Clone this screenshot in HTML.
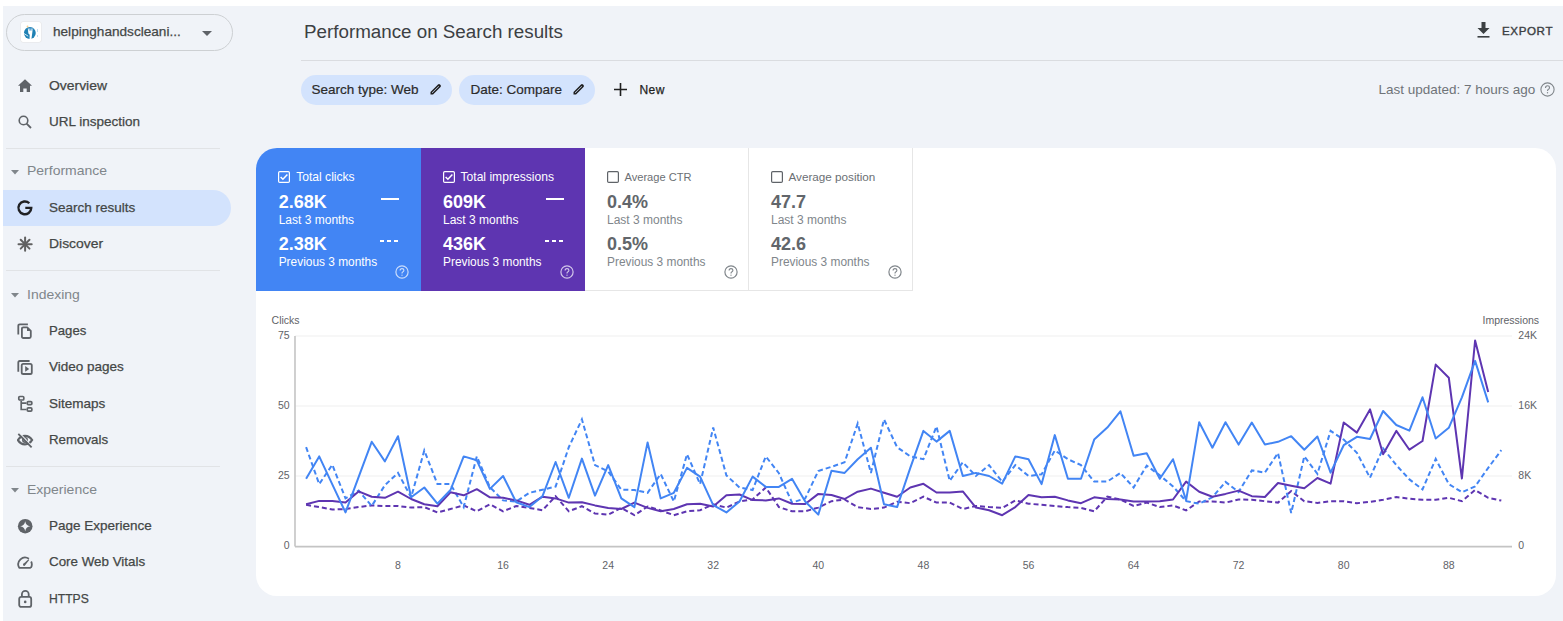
<!DOCTYPE html>
<html><head><meta charset="utf-8"><title>Performance on Search results</title>
<style>
html,body{margin:0;padding:0;width:1563px;height:621px;overflow:hidden;background:#fff}
#bg{position:absolute;left:3px;top:6px;width:1560px;height:615px;background:#f0f3f8}
.t{position:absolute;white-space:nowrap;line-height:1;font-family:"Liberation Sans",sans-serif}
</style></head><body>
<div id="bg"></div>
<div style="position:absolute;left:6px;top:14px;width:225px;height:35px;border:1px solid #cdd0d3;border-radius:19px;"></div>
<div style="position:absolute;left:21px;top:22px;width:20px;height:20px;background:#fff;border-radius:2px;box-shadow:0 0 0 0.5px #e4e4e4;"></div>
<svg style="position:absolute;left:21px;top:22px" width="20" height="20" viewBox="0 0 20 20"><circle cx="8.85" cy="11" r="5.9" fill="#1f81b4"/><path d="M6.8 6.6 L11.8 6.6 L11.2 11.5 L10.4 17.2 L8.5 17.2 L8.7 12.8 L7.4 11.4 Z" fill="#fff"/><path d="M2.8 11.4 L7.2 14.2" stroke="#fff" stroke-width="0.8"/><path d="M8 5.6 L8.3 8.6 M9.5 5.4 L9.6 8.6 M11 5.6 L10.9 8.6" stroke="#3d93c9" stroke-width="0.8"/><circle cx="6.5" cy="4.5" r="0.9" fill="#f7c46c" opacity="0.8"/><rect x="16" y="7" width="0.9" height="3" fill="#b9dbf0"/><rect x="16" y="13" width="0.9" height="2" fill="#b9dbf0"/></svg>
<div class="t" style="left:53px;top:25.49px;font-size:13.6px;color:#444746;font-weight:400;-webkit-text-stroke:0.25px #444746;">helpinghandscleani...</div>
<svg style="position:absolute;left:202px;top:31px" width="10" height="5" viewBox="0 0 10 5"><path d="M0 0 L10 0 L5 5 Z" fill="#5f6368"/></svg>
<div style="position:absolute;left:3px;top:190px;width:228px;height:36px;background:#d3e3fd;border-radius:0 18px 18px 0;"></div>
<div class="t" style="left:49px;top:78.87px;font-size:13.5px;color:#444746;font-weight:400;-webkit-text-stroke:0.25px #444746;transform:scaleX(1.03);transform-origin:0 0;">Overview</div>
<div class="t" style="left:49px;top:114.87px;font-size:13.5px;color:#444746;font-weight:400;-webkit-text-stroke:0.25px #444746;">URL inspection</div>
<div class="t" style="left:49px;top:200.87px;font-size:13.5px;color:#444746;font-weight:400;-webkit-text-stroke:0.25px #444746;">Search results</div>
<div class="t" style="left:49px;top:236.87px;font-size:13.5px;color:#444746;font-weight:400;-webkit-text-stroke:0.25px #444746;transform:scaleX(1.03);transform-origin:0 0;">Discover</div>
<div class="t" style="left:49px;top:323.87px;font-size:13.5px;color:#444746;font-weight:400;-webkit-text-stroke:0.25px #444746;transform:scaleX(0.975);transform-origin:0 0;">Pages</div>
<div class="t" style="left:49px;top:359.87px;font-size:13.5px;color:#444746;font-weight:400;-webkit-text-stroke:0.25px #444746;">Video pages</div>
<div class="t" style="left:49px;top:396.87px;font-size:13.5px;color:#444746;font-weight:400;-webkit-text-stroke:0.25px #444746;">Sitemaps</div>
<div class="t" style="left:49px;top:432.87px;font-size:13.5px;color:#444746;font-weight:400;-webkit-text-stroke:0.25px #444746;transform:scaleX(0.985);transform-origin:0 0;">Removals</div>
<div class="t" style="left:49px;top:518.87px;font-size:13.5px;color:#444746;font-weight:400;-webkit-text-stroke:0.25px #444746;">Page Experience</div>
<div class="t" style="left:49px;top:554.87px;font-size:13.5px;color:#444746;font-weight:400;-webkit-text-stroke:0.25px #444746;transform:scaleX(0.99);transform-origin:0 0;">Core Web Vitals</div>
<div class="t" style="left:49px;top:591.87px;font-size:13.5px;color:#444746;font-weight:400;-webkit-text-stroke:0.25px #444746;transform:scaleX(0.9);transform-origin:0 0;">HTTPS</div>
<div class="t" style="left:27px;top:164.07px;font-size:13.5px;color:#80868b;font-weight:400;transform:scaleX(1.035);transform-origin:0 0;">Performance</div>
<svg style="position:absolute;left:11px;top:169.5px" width="8" height="5" viewBox="0 0 8 5"><path d="M0 0 L8 0 L4 4.5 Z" fill="#80868b"/></svg>
<div class="t" style="left:27px;top:287.57px;font-size:13.5px;color:#80868b;font-weight:400;transform:scaleX(1.035);transform-origin:0 0;">Indexing</div>
<svg style="position:absolute;left:11px;top:293px" width="8" height="5" viewBox="0 0 8 5"><path d="M0 0 L8 0 L4 4.5 Z" fill="#80868b"/></svg>
<div class="t" style="left:27px;top:482.57px;font-size:13.5px;color:#80868b;font-weight:400;transform:scaleX(1.035);transform-origin:0 0;">Experience</div>
<svg style="position:absolute;left:11px;top:488px" width="8" height="5" viewBox="0 0 8 5"><path d="M0 0 L8 0 L4 4.5 Z" fill="#80868b"/></svg>
<div style="position:absolute;left:6px;top:148px;width:214px;height:1px;background:#e1e3e6"></div>
<div style="position:absolute;left:6px;top:270px;width:214px;height:1px;background:#e1e3e6"></div>
<div style="position:absolute;left:6px;top:466px;width:214px;height:1px;background:#e1e3e6"></div>
<svg style="position:absolute;left:18px;top:79px" width="14" height="13" viewBox="0 0 14 13"><path d="M7 0.3 L14 6.8 L12 6.8 L12 13 L8.7 13 L8.7 9.5 L5.3 9.5 L5.3 13 L2 13 L2 6.8 L0 6.8 Z" fill="#5f6368"/></svg>
<svg style="position:absolute;left:18px;top:115px" width="14" height="14" viewBox="0 0 14 14"><circle cx="5.5" cy="5.5" r="4.3" fill="none" stroke="#5f6368" stroke-width="1.6"/><path d="M8.6 8.6 L13 13" stroke="#5f6368" stroke-width="1.8"/></svg>
<svg style="position:absolute;left:16px;top:199px" width="18" height="18" viewBox="0 0 18 18"><path d="M13.3 4.25 A6.4 6.4 0 1 0 15.25 8.9 L9.3 8.9" fill="none" stroke="#202124" stroke-width="2.4"/></svg>
<svg style="position:absolute;left:17px;top:236px" width="17" height="17" viewBox="0 0 17 17"><g stroke="#616161" stroke-width="2" stroke-linecap="round"><path d="M8.1 1.6 V14.8"/><path d="M1.5 8.2 H14.7"/><path d="M3.7 3.8 L12.5 12.6"/><path d="M12.5 3.8 L3.7 12.6"/></g></svg>
<svg style="position:absolute;left:17px;top:322px" width="17" height="19" viewBox="0 0 17 19"><g fill="none" stroke="#5f6368" stroke-width="1.8"><path d="M1.3 12.5 V3.8 Q1.3 2.3 2.8 2.3 H10.9"/><path d="M4.9 6.8 Q4.9 5.3 6.4 5.3 H10.2 L13.8 8.9 V14.5 Q13.8 16 12.3 16 H6.4 Q4.9 16 4.9 14.5 Z" stroke-linejoin="round"/></g><path d="M10 5.3 L13.8 9.1 H10 Z" fill="#5f6368"/></svg>
<svg style="position:absolute;left:17px;top:358px" width="17" height="18" viewBox="0 0 17 18"><g fill="none" stroke="#5f6368" stroke-width="1.8"><path d="M1.3 13.8 V4.5 Q1.3 3 2.8 3 H12.6"/><rect x="4.7" y="5.9" width="10.1" height="10.1" rx="1.6"/></g><path d="M8.2 8.1 L12.2 10.95 L8.2 13.8 Z" fill="#5f6368"/></svg>
<svg style="position:absolute;left:17px;top:394px" width="17" height="19" viewBox="0 0 17 19"><g fill="none" stroke="#5f6368" stroke-width="1.7"><rect x="1.8" y="2.5" width="5" height="3.5" rx="1"/><rect x="10.25" y="7.65" width="4.6" height="2.9" rx="1"/><rect x="10.25" y="13.95" width="4.6" height="3.1" rx="1"/><path d="M4.2 6.85 V15.5 H9.4 M4.2 9.1 H9.4"/></g></svg>
<svg style="position:absolute;left:17px;top:432px" width="17" height="16" viewBox="0 0 17 16"><path d="M0.9 8.05 C2.9 4.6 5.6 3.8 8 3.8 C10.4 3.8 13.1 4.6 15.1 8.05 C13.1 11.5 10.4 12.3 8 12.3 C5.6 12.3 2.9 11.5 0.9 8.05 Z" fill="none" stroke="#5f6368" stroke-width="2.2"/><circle cx="8" cy="8.05" r="2.2" fill="none" stroke="#5f6368" stroke-width="1.5"/><path d="M2.3 0.6 L15.8 15.3" stroke="#f0f3f8" stroke-width="1.2"/><path d="M1.3 1.9 L14.6 15.3" stroke="#5f6368" stroke-width="1.8"/></svg>
<svg style="position:absolute;left:17px;top:518px" width="16" height="16" viewBox="0 0 16 16"><circle cx="8.2" cy="8.2" r="7.3" fill="#5f6368"/><path d="M8.2 3.2 Q8.9 7.5 13.2 8.2 Q8.9 8.9 8.2 13.2 Q7.5 8.9 3.2 8.2 Q7.5 7.5 8.2 3.2 Z" fill="#f0f3f8"/></svg>
<svg style="position:absolute;left:17px;top:555px" width="17" height="15" viewBox="0 0 17 15"><path d="M13.85 12.8 H2.25 A6.75 6.75 0 0 1 11.92 3.82 M14.17 6.5 A6.75 6.75 0 0 1 13.85 12.8" fill="none" stroke="#5f6368" stroke-width="1.8" stroke-linejoin="round"/><path d="M6.3 8.9 L11.5 4.3 L12.2 5 L7.9 10.6 Z" fill="#5f6368"/><circle cx="7.1" cy="9.75" r="1.15" fill="#5f6368"/></svg>
<svg style="position:absolute;left:17px;top:588px" width="17" height="21" viewBox="0 0 17 21"><g fill="none" stroke="#5f6368" stroke-width="1.8"><rect x="2.2" y="8.9" width="12" height="10" rx="2"/><path d="M4.9 8.9 V6.3 A3.4 3.4 0 0 1 11.7 6.3 V8.9"/></g><circle cx="8.2" cy="13.9" r="1.3" fill="#5f6368"/></svg>
<div class="t" style="left:304px;top:22.69px;font-size:18.8px;color:#3c4043;font-weight:400;">Performance on Search results</div>
<div style="position:absolute;left:301px;top:60px;width:1262px;height:1px;background:#dadce0"></div>
<svg style="position:absolute;left:1477px;top:22px" width="13" height="16" viewBox="0 0 13 16"><path d="M4.5 0 H8.5 V6 H12.5 L6.5 12 L0.5 6 H4.5 Z" fill="#3c4043"/><rect x="0.5" y="14" width="12" height="1.6" fill="#3c4043"/></svg>
<div class="t" style="left:1502px;top:25.38px;font-size:11.6px;color:#3c4043;font-weight:400;letter-spacing:0.6px;-webkit-text-stroke:0.4px #3c4043">EXPORT</div>
<div style="position:absolute;left:301px;top:75px;width:151px;height:30px;background:#d3e3fd;border-radius:15px"></div>
<div style="position:absolute;left:459px;top:75px;width:136px;height:30px;background:#d3e3fd;border-radius:15px"></div>
<div class="t" style="left:311.5px;top:82.57px;font-size:13.5px;color:#2b2b2b;font-weight:400;-webkit-text-stroke:0.2px #2b2b2b;">Search type: Web</div>
<div class="t" style="left:470.4px;top:82.57px;font-size:13.5px;color:#2b2b2b;font-weight:400;-webkit-text-stroke:0.2px #2b2b2b;">Date: Compare</div>
<svg style="position:absolute;left:430px;top:83px" width="12" height="12" viewBox="0 0 12 12"><path d="M0.5 11.5 L0.5 9 L8 1.5 Q9 0.5 10 1.5 L10.5 2 Q11.5 3 10.5 4 L3 11.5 Z M2 9.6 L2 10 L2.4 10 L9 3.4 L8.6 3 Z" fill="#1f1f1f" fill-rule="evenodd"/></svg>
<svg style="position:absolute;left:573px;top:83px" width="12" height="12" viewBox="0 0 12 12"><path d="M0.5 11.5 L0.5 9 L8 1.5 Q9 0.5 10 1.5 L10.5 2 Q11.5 3 10.5 4 L3 11.5 Z M2 9.6 L2 10 L2.4 10 L9 3.4 L8.6 3 Z" fill="#1f1f1f" fill-rule="evenodd"/></svg>
<svg style="position:absolute;left:614px;top:83px" width="13" height="13" viewBox="0 0 13 13"><path d="M5.7 0 H7.3 V5.7 H13 V7.3 H7.3 V13 H5.7 V7.3 H0 V5.7 H5.7 Z" fill="#1f1f1f"/></svg>
<div class="t" style="left:639.6px;top:83.84px;font-size:12px;color:#1f1f1f;font-weight:400;letter-spacing:0.35px;-webkit-text-stroke:0.25px #1f1f1f">New</div>
<div class="t" style="left:1378.5px;top:83.37px;font-size:13.5px;color:#6f7378;font-weight:400;">Last updated: 7 hours ago</div>
<svg style="position:absolute;left:1540px;top:82px" width="15" height="15" viewBox="0 0 15 15"><circle cx="7.5" cy="7.5" r="6.6" fill="none" stroke="#80868b" stroke-width="1.1"/><path d="M5.5 6 Q5.5 3.8 7.5 3.8 Q9.5 3.8 9.5 5.7 Q9.5 6.9 8.2 7.5 Q7.5 7.9 7.5 9" fill="none" stroke="#80868b" stroke-width="1.1"/><circle cx="7.5" cy="10.8" r="0.7" fill="#80868b"/></svg>
<div style="position:absolute;left:256px;top:148px;width:1300px;height:448px;background:#fff;border-radius:21px;overflow:hidden">
<div style="position:absolute;left:0;top:0;width:165px;height:143px;background:#4285f4"></div>
<div style="position:absolute;left:165px;top:0;width:164px;height:143px;background:#5e35b1"></div>
<div style="position:absolute;left:329px;top:0;width:164px;height:143px;border-right:1px solid #e6e6e6;border-bottom:1px solid #e6e6e6;box-sizing:border-box"></div>
<div style="position:absolute;left:492px;top:0;width:165px;height:143px;border-right:1px solid #e6e6e6;border-bottom:1px solid #e6e6e6;box-sizing:border-box"></div>
</div>
<svg style="position:absolute;left:278px;top:171px" width="12" height="12" viewBox="0 0 12 12"><rect x="0.6" y="0.6" width="10.8" height="10.8" rx="1.2" fill="none" stroke="#fff" stroke-width="1.2"/><path d="M2.6 6 L4.9 8.3 L9.4 3.6" fill="none" stroke="#fff" stroke-width="1.5"/></svg>
<div class="t" style="left:296.2px;top:170.96px;font-size:12.1px;color:#fff;font-weight:400;">Total clicks</div>
<div class="t" style="left:278.7px;top:193.06px;font-size:18px;color:#fff;font-weight:700;">2.68K</div>
<div class="t" style="left:278.7px;top:214.04px;font-size:12px;color:#fff;font-weight:400;">Last 3 months</div>
<div class="t" style="left:278.7px;top:235.26px;font-size:18px;color:#fff;font-weight:700;">2.38K</div>
<div class="t" style="left:278.7px;top:256.93px;font-size:11.9px;color:#fff;font-weight:400;">Previous 3 months</div>
<svg style="position:absolute;left:395px;top:265px" width="14" height="14" viewBox="0 0 14 14"><circle cx="7" cy="7" r="6.1" fill="none" stroke="rgba(255,255,255,0.72)" stroke-width="1.2"/><path d="M5.1 5.6 Q5.1 3.6 7 3.6 Q8.9 3.6 8.9 5.3 Q8.9 6.4 7.7 7 Q7 7.4 7 8.5" fill="none" stroke="rgba(255,255,255,0.72)" stroke-width="1.15"/><circle cx="7" cy="10.2" r="0.65" fill="rgba(255,255,255,0.72)"/></svg>
<div style="position:absolute;left:381.2px;top:198px;width:18px;height:2px;background:#fff"></div>
<svg style="position:absolute;left:380px;top:240px" width="18" height="2" viewBox="0 0 18 2"><path d="M0 1 H4 M7 1 H11 M14 1 H18" stroke="#fff" stroke-width="2"/></svg>
<svg style="position:absolute;left:443px;top:171px" width="12" height="12" viewBox="0 0 12 12"><rect x="0.6" y="0.6" width="10.8" height="10.8" rx="1.2" fill="none" stroke="#fff" stroke-width="1.2"/><path d="M2.6 6 L4.9 8.3 L9.4 3.6" fill="none" stroke="#fff" stroke-width="1.5"/></svg>
<div class="t" style="left:460.5px;top:170.96px;font-size:12.1px;color:#fff;font-weight:400;">Total impressions</div>
<div class="t" style="left:443px;top:193.06px;font-size:18px;color:#fff;font-weight:700;">609K</div>
<div class="t" style="left:443px;top:214.04px;font-size:12px;color:#fff;font-weight:400;">Last 3 months</div>
<div class="t" style="left:443px;top:235.26px;font-size:18px;color:#fff;font-weight:700;">436K</div>
<div class="t" style="left:443px;top:256.93px;font-size:11.9px;color:#fff;font-weight:400;">Previous 3 months</div>
<svg style="position:absolute;left:560px;top:265px" width="14" height="14" viewBox="0 0 14 14"><circle cx="7" cy="7" r="6.1" fill="none" stroke="rgba(255,255,255,0.72)" stroke-width="1.2"/><path d="M5.1 5.6 Q5.1 3.6 7 3.6 Q8.9 3.6 8.9 5.3 Q8.9 6.4 7.7 7 Q7 7.4 7 8.5" fill="none" stroke="rgba(255,255,255,0.72)" stroke-width="1.15"/><circle cx="7" cy="10.2" r="0.65" fill="rgba(255,255,255,0.72)"/></svg>
<div style="position:absolute;left:545.5px;top:198px;width:18px;height:2px;background:#fff"></div>
<svg style="position:absolute;left:545px;top:240px" width="18" height="2" viewBox="0 0 18 2"><path d="M0 1 H4 M7 1 H11 M14 1 H18" stroke="#fff" stroke-width="2"/></svg>
<svg style="position:absolute;left:607px;top:171px" width="12" height="12" viewBox="0 0 12 12"><rect x="0.6" y="0.6" width="10.8" height="10.8" rx="1.2" fill="none" stroke="#5f6368" stroke-width="1.2"/></svg>
<div class="t" style="left:624.5px;top:171.80px;font-size:11.1px;color:#6b6f74;font-weight:400;">Average CTR</div>
<div class="t" style="left:607px;top:193.06px;font-size:18px;color:#62666b;font-weight:700;">0.4%</div>
<div class="t" style="left:607px;top:214.04px;font-size:12px;color:#80868b;font-weight:400;">Last 3 months</div>
<div class="t" style="left:607px;top:235.26px;font-size:18px;color:#62666b;font-weight:700;">0.5%</div>
<div class="t" style="left:607px;top:256.93px;font-size:11.9px;color:#80868b;font-weight:400;">Previous 3 months</div>
<svg style="position:absolute;left:724px;top:265px" width="14" height="14" viewBox="0 0 14 14"><circle cx="7" cy="7" r="6.1" fill="none" stroke="#80868b" stroke-width="1.2"/><path d="M5.1 5.6 Q5.1 3.6 7 3.6 Q8.9 3.6 8.9 5.3 Q8.9 6.4 7.7 7 Q7 7.4 7 8.5" fill="none" stroke="#80868b" stroke-width="1.15"/><circle cx="7" cy="10.2" r="0.65" fill="#80868b"/></svg>
<svg style="position:absolute;left:771px;top:171px" width="12" height="12" viewBox="0 0 12 12"><rect x="0.6" y="0.6" width="10.8" height="10.8" rx="1.2" fill="none" stroke="#5f6368" stroke-width="1.2"/></svg>
<div class="t" style="left:788.5px;top:171.30px;font-size:11.7px;color:#6b6f74;font-weight:400;">Average position</div>
<div class="t" style="left:771px;top:193.06px;font-size:18px;color:#62666b;font-weight:700;">47.7</div>
<div class="t" style="left:771px;top:214.04px;font-size:12px;color:#80868b;font-weight:400;">Last 3 months</div>
<div class="t" style="left:771px;top:235.26px;font-size:18px;color:#62666b;font-weight:700;">42.6</div>
<div class="t" style="left:771px;top:256.93px;font-size:11.9px;color:#80868b;font-weight:400;">Previous 3 months</div>
<svg style="position:absolute;left:888px;top:265px" width="14" height="14" viewBox="0 0 14 14"><circle cx="7" cy="7" r="6.1" fill="none" stroke="#80868b" stroke-width="1.2"/><path d="M5.1 5.6 Q5.1 3.6 7 3.6 Q8.9 3.6 8.9 5.3 Q8.9 6.4 7.7 7 Q7 7.4 7 8.5" fill="none" stroke="#80868b" stroke-width="1.15"/><circle cx="7" cy="10.2" r="0.65" fill="#80868b"/></svg>
<div class="t" style="left:271.6px;top:315.11px;font-size:10.5px;color:#5f6368;font-weight:400;">Clicks</div>
<div class="t" style="left:1482.5px;top:315.11px;font-size:10.5px;color:#5f6368;font-weight:400;">Impressions</div>
<div class="t" style="right:1273.4px;top:329.81px;font-size:10.5px;color:#5f6368">75</div>
<div class="t" style="right:1273.4px;top:399.81px;font-size:10.5px;color:#5f6368">50</div>
<div class="t" style="right:1273.4px;top:469.81px;font-size:10.5px;color:#5f6368">25</div>
<div class="t" style="right:1273.4px;top:539.81px;font-size:10.5px;color:#5f6368">0</div>
<div class="t" style="left:1518.3px;top:329.81px;font-size:10.5px;color:#5f6368;font-weight:400;">24K</div>
<div class="t" style="left:1518.3px;top:399.81px;font-size:10.5px;color:#5f6368;font-weight:400;">16K</div>
<div class="t" style="left:1518.3px;top:469.81px;font-size:10.5px;color:#5f6368;font-weight:400;">8K</div>
<div class="t" style="left:1518.3px;top:539.81px;font-size:10.5px;color:#5f6368;font-weight:400;">0</div>
<div class="t" style="left:378.0px;width:40px;text-align:center;top:559.91px;font-size:10.5px;color:#5f6368">8</div>
<div class="t" style="left:483.1px;width:40px;text-align:center;top:559.91px;font-size:10.5px;color:#5f6368">16</div>
<div class="t" style="left:588.2px;width:40px;text-align:center;top:559.91px;font-size:10.5px;color:#5f6368">24</div>
<div class="t" style="left:693.2px;width:40px;text-align:center;top:559.91px;font-size:10.5px;color:#5f6368">32</div>
<div class="t" style="left:798.3px;width:40px;text-align:center;top:559.91px;font-size:10.5px;color:#5f6368">40</div>
<div class="t" style="left:903.4px;width:40px;text-align:center;top:559.91px;font-size:10.5px;color:#5f6368">48</div>
<div class="t" style="left:1008.5px;width:40px;text-align:center;top:559.91px;font-size:10.5px;color:#5f6368">56</div>
<div class="t" style="left:1113.6px;width:40px;text-align:center;top:559.91px;font-size:10.5px;color:#5f6368">64</div>
<div class="t" style="left:1218.6px;width:40px;text-align:center;top:559.91px;font-size:10.5px;color:#5f6368">72</div>
<div class="t" style="left:1323.7px;width:40px;text-align:center;top:559.91px;font-size:10.5px;color:#5f6368">80</div>
<div class="t" style="left:1428.8px;width:40px;text-align:center;top:559.91px;font-size:10.5px;color:#5f6368">88</div>
<svg style="position:absolute;left:0;top:0" width="1563" height="621">
<line x1="295" x2="1512" y1="336.0" y2="336.0" stroke="#efefef" stroke-width="1"/>
<line x1="295" x2="1512" y1="406.0" y2="406.0" stroke="#efefef" stroke-width="1"/>
<line x1="295" x2="1512" y1="476.0" y2="476.0" stroke="#efefef" stroke-width="1"/>
<line x1="295" x2="1512" y1="546.6" y2="546.6" stroke="#c4c4c4" stroke-width="1.6"/>
<line x1="295" x2="295" y1="336" y2="546.6" stroke="#c4c4c4" stroke-width="1.6"/>
<path d="M306.1,504.8 L319.2,507.1 L332.3,509.6 L345.5,509.0 L358.6,507.1 L371.7,505.4 L384.9,506.0 L398.0,506.0 L411.1,507.6 L424.3,507.1 L437.4,512.4 L450.5,509.0 L463.7,505.4 L476.8,511.3 L489.9,504.3 L503.1,511.3 L516.2,506.0 L529.4,507.9 L542.5,510.2 L555.6,496.2 L568.8,511.3 L581.9,506.2 L595.0,513.5 L608.2,514.6 L621.3,507.9 L634.4,515.2 L647.6,506.5 L660.7,510.4 L673.8,515.2 L687.0,511.3 L700.1,510.2 L713.2,504.3 L726.4,507.6 L739.5,501.5 L752.6,499.5 L765.8,487.5 L778.9,507.1 L792.0,511.3 L805.2,511.3 L818.3,507.6 L831.5,501.2 L844.6,499.5 L857.7,507.1 L870.9,509.0 L884.0,507.6 L897.1,501.8 L910.3,503.2 L923.4,496.7 L936.5,502.6 L949.7,502.6 L962.8,509.0 L975.9,506.0 L989.1,507.1 L1002.2,507.9 L1015.3,500.4 L1028.5,503.7 L1041.6,504.8 L1054.8,506.0 L1067.9,507.1 L1081.0,507.9 L1094.2,511.3 L1107.3,496.7 L1120.4,499.5 L1133.6,506.0 L1146.7,502.6 L1159.8,507.1 L1173.0,505.4 L1186.1,510.4 L1199.2,501.5 L1212.4,501.5 L1225.5,502.6 L1238.6,499.5 L1251.8,499.8 L1264.9,501.2 L1278.0,502.6 L1291.2,491.1 L1304.3,501.2 L1317.4,502.9 L1330.6,501.2 L1343.7,501.2 L1356.9,503.2 L1370.0,501.8 L1383.1,499.8 L1396.3,497.0 L1409.4,498.7 L1422.5,499.8 L1435.7,499.8 L1448.8,497.8 L1461.9,501.2 L1475.1,490.0 L1488.2,497.8 L1501.3,500.6" fill="none" stroke="#5e35b1" stroke-width="2" stroke-dasharray="5 3"/>
<path d="M306.1,447.2 L319.2,484.1 L332.3,464.8 L345.5,498.4 L358.6,490.6 L371.7,506.0 L384.9,485.2 L398.0,472.9 L411.1,497.3 L424.3,450.5 L437.4,484.1 L450.5,484.1 L463.7,507.1 L476.8,456.4 L489.9,487.2 L503.1,500.4 L516.2,501.5 L529.4,492.8 L542.5,489.7 L555.6,486.6 L568.8,447.2 L581.9,419.4 L595.0,465.1 L608.2,471.5 L621.3,489.7 L634.4,490.0 L647.6,492.8 L660.7,474.0 L673.8,501.5 L687.0,454.2 L700.1,484.1 L713.2,427.6 L726.4,475.4 L739.5,487.5 L752.6,490.0 L765.8,456.4 L778.9,473.2 L792.0,502.6 L805.2,498.4 L818.3,471.0 L831.5,466.8 L844.6,462.3 L857.7,423.4 L870.9,472.9 L884.0,419.4 L897.1,447.2 L910.3,456.4 L923.4,459.2 L936.5,426.4 L949.7,480.8 L962.8,462.3 L975.9,476.0 L989.1,465.1 L1002.2,481.9 L1015.3,465.1 L1028.5,476.0 L1041.6,474.3 L1054.8,450.5 L1067.9,459.2 L1081.0,465.1 L1094.2,481.6 L1107.3,481.6 L1120.4,472.9 L1133.6,487.5 L1146.7,465.6 L1159.8,475.4 L1173.0,486.4 L1186.1,501.2 L1199.2,503.7 L1212.4,497.3 L1225.5,481.9 L1238.6,492.0 L1251.8,470.4 L1264.9,472.6 L1278.0,453.0 L1291.2,513.0 L1304.3,456.4 L1317.4,473.8 L1330.6,430.9 L1343.7,439.6 L1356.9,452.8 L1370.0,477.7 L1383.1,448.3 L1396.3,465.1 L1409.4,479.4 L1422.5,489.4 L1435.7,458.9 L1448.8,484.1 L1461.9,492.2 L1475.1,486.4 L1488.2,467.9 L1501.3,450.2" fill="none" stroke="#4285f4" stroke-width="2" stroke-dasharray="5 3"/>
<path d="M306.1,504.3 L319.2,500.9 L332.3,500.9 L345.5,502.6 L358.6,491.4 L371.7,496.7 L384.9,497.8 L398.0,491.7 L411.1,499.0 L424.3,504.3 L437.4,506.2 L450.5,492.2 L463.7,495.3 L476.8,489.2 L489.9,497.3 L503.1,497.8 L516.2,500.4 L529.4,504.8 L542.5,496.7 L555.6,498.4 L568.8,502.6 L581.9,502.3 L595.0,505.4 L608.2,507.9 L621.3,509.0 L634.4,502.6 L647.6,507.9 L660.7,511.3 L673.8,509.0 L687.0,504.3 L700.1,503.7 L713.2,506.5 L726.4,495.3 L739.5,494.5 L752.6,500.1 L765.8,500.4 L778.9,498.4 L792.0,503.7 L805.2,504.0 L818.3,493.9 L831.5,495.0 L844.6,499.0 L857.7,491.7 L870.9,488.6 L884.0,492.8 L897.1,496.7 L910.3,487.5 L923.4,483.8 L936.5,492.5 L949.7,492.5 L962.8,491.4 L975.9,507.6 L989.1,510.2 L1002.2,515.2 L1015.3,507.1 L1028.5,495.0 L1041.6,497.3 L1054.8,496.7 L1067.9,500.4 L1081.0,503.2 L1094.2,497.3 L1107.3,499.0 L1120.4,499.5 L1133.6,501.5 L1146.7,501.5 L1159.8,501.2 L1173.0,499.5 L1186.1,481.6 L1199.2,491.7 L1212.4,496.7 L1225.5,493.9 L1238.6,490.6 L1251.8,496.2 L1264.9,497.0 L1278.0,483.0 L1291.2,485.8 L1304.3,488.3 L1317.4,478.0 L1330.6,483.6 L1343.7,422.5 L1356.9,432.6 L1370.0,409.4 L1383.1,454.2 L1396.3,430.9 L1409.4,449.7 L1422.5,441.0 L1435.7,364.6 L1448.8,377.7 L1461.9,478.5 L1475.1,340.5 L1488.2,392.0" fill="none" stroke="#5e35b1" stroke-width="2" stroke-linejoin="round"/>
<path d="M306.1,478.8 L319.2,456.4 L332.3,484.4 L345.5,512.4 L358.6,477.1 L371.7,441.8 L384.9,461.4 L398.0,436.2 L411.1,497.3 L424.3,487.5 L437.4,503.7 L450.5,490.0 L463.7,456.4 L476.8,460.3 L489.9,488.9 L503.1,476.0 L516.2,502.3 L529.4,507.1 L542.5,496.2 L555.6,462.0 L568.8,497.8 L581.9,458.6 L595.0,495.6 L608.2,465.1 L621.3,498.4 L634.4,507.1 L647.6,442.4 L660.7,498.4 L673.8,492.8 L687.0,467.9 L700.1,476.6 L713.2,505.1 L726.4,512.4 L739.5,501.5 L752.6,476.6 L765.8,486.9 L778.9,486.9 L792.0,478.8 L805.2,501.5 L818.3,514.6 L831.5,470.7 L844.6,472.9 L857.7,459.2 L870.9,447.7 L884.0,504.3 L897.1,507.1 L910.3,467.9 L923.4,430.9 L936.5,441.6 L949.7,430.9 L962.8,476.0 L975.9,472.9 L989.1,476.0 L1002.2,483.6 L1015.3,456.4 L1028.5,459.2 L1041.6,484.1 L1054.8,435.1 L1067.9,478.8 L1081.0,478.8 L1094.2,439.6 L1107.3,427.6 L1120.4,411.3 L1133.6,455.8 L1146.7,453.3 L1159.8,478.8 L1173.0,459.2 L1186.1,500.4 L1199.2,422.2 L1212.4,447.7 L1225.5,422.2 L1238.6,444.6 L1251.8,422.5 L1264.9,444.6 L1278.0,441.8 L1291.2,436.2 L1304.3,449.7 L1317.4,436.5 L1330.6,472.6 L1343.7,445.2 L1356.9,436.8 L1370.0,439.0 L1383.1,411.0 L1396.3,425.0 L1409.4,430.6 L1422.5,397.3 L1435.7,438.5 L1448.8,427.8 L1461.9,397.3 L1475.1,360.9 L1488.2,402.4" fill="none" stroke="#4285f4" stroke-width="2" stroke-linejoin="round"/>
</svg>
</body></html>
